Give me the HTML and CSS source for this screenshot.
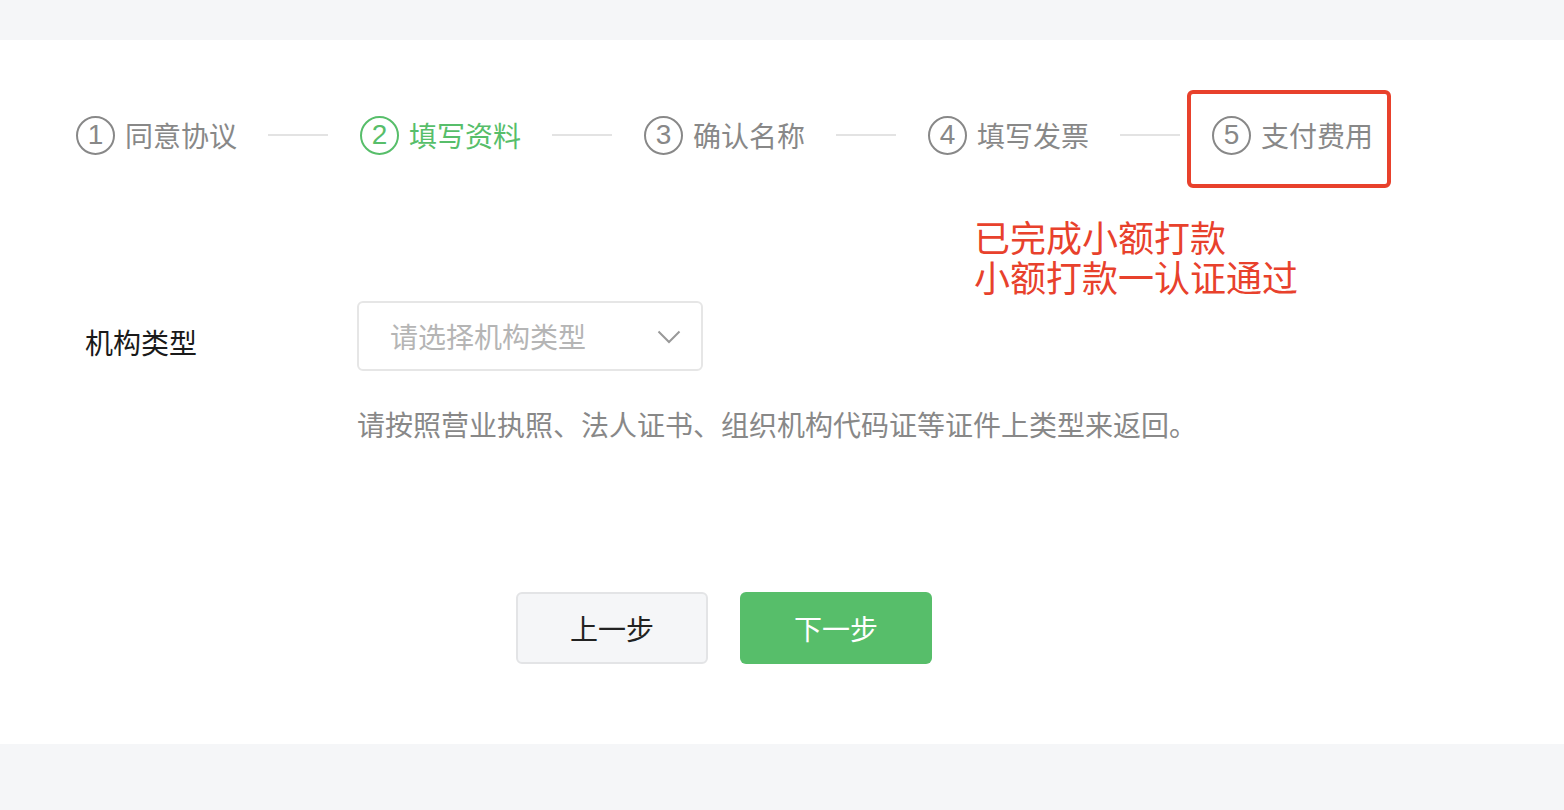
FILE: index.html
```html
<!DOCTYPE html>
<html lang="zh-CN">
  <head>
    <meta charset="UTF-8" />
    <meta name="viewport" content="width=device-width, initial-scale=1.0" />
    <title>机构认证</title>
    <link rel="stylesheet" href="styles.css">
  </head>
  <body>
    <div class="top-band"></div>

    <div class="card">
      <div class="steps">
        <div class="step">
          <span class="step-num">1</span>
          <span class="step-name">同意协议</span>
        </div>
        <div class="step-line"></div>
        <div class="step active">
          <span class="step-num">2</span>
          <span class="step-name">填写资料</span>
        </div>
        <div class="step-line"></div>
        <div class="step">
          <span class="step-num">3</span>
          <span class="step-name">确认名称</span>
        </div>
        <div class="step-line"></div>
        <div class="step">
          <span class="step-num">4</span>
          <span class="step-name">填写发票</span>
        </div>
        <div class="step-line"></div>
        <div class="step marked">
          <span class="step-num">5</span>
          <span class="step-name">支付费用</span>
        </div>
      </div>

      <div class="note">
        <p>已完成小额打款</p>
        <p>小额打款一认证通过</p>
      </div>

      <div class="form-row">
        <label class="form-label">机构类型</label>
        <div class="select">
          <span class="select-placeholder">请选择机构类型</span>
          <svg class="select-arrow" width="24" height="14" viewBox="0 0 24 14">
            <polyline points="1.5,1.5 12,12 22.5,1.5" fill="none" stroke="#999" stroke-width="2" />
          </svg>
        </div>
      </div>

      <p class="form-hint">请按照营业执照、法人证书、组织机构代码证等证件上类型来返回。</p>

      <div class="actions">
        <button class="btn btn-prev">上一步</button>
        <button class="btn btn-next">下一步</button>
      </div>
    </div>
  </body>
</html>
```

FILE: styles.css
```css
body {
  margin: 0;
  font-family: "Noto Sans CJK SC", "Noto Sans", sans-serif;
  background: #f5f6f8;
  color: #222;
}

.top-band {
  height: 40px;
}

.card {
  background: white;
  height: 704px;
  box-sizing: border-box;
  padding-top: 75px;
}

.steps {
  display: flex;
  align-items: center;
  height: 40px;
  padding-left: 76px;
}

.step {
  position: relative;
  display: flex;
  align-items: center;
  gap: 10px;
  color: #888;
}

.step-num {
  width: 35px;
  height: 35px;
  border: 2px solid #888;
  border-radius: 50%;
  display: flex;
  align-items: center;
  justify-content: center;
  font-size: 28px;
  font-family: "Liberation Sans", sans-serif;
  line-height: 1;
}

.step-name {
  font-size: 28px;
  line-height: 40px;
  width: 111px;
  white-space: nowrap;
}

.step.active {
  color: #57be6a;
}

.step.active .step-num {
  border-color: #57be6a;
}

/* red annotation box drawn over step 5 */
.step.marked::after {
  content: "";
  position: absolute;
  left: -25px;
  top: -25px;
  width: 196px;
  height: 90px;
  border: 4px solid #e8412c;
  border-radius: 6px;
}

.step-line {
  width: 60px;
  height: 2px;
  background: #e3e3e3;
  margin: 0 32px;
}

.note {
  margin-top: 61px;
  margin-left: 974px;
  color: #e8412c;
  font-size: 36px;
  line-height: 40px;
}

.note p {
  margin: 0;
}

.form-row {
  display: flex;
  align-items: flex-start;
  margin-top: 5px;
  padding-left: 85px;
}

.form-label {
  width: 272px;
  font-size: 28px;
  line-height: 40px;
  padding-top: 21px;
  color: #1a1a1a;
}

.select {
  width: 346px;
  height: 70px;
  box-sizing: border-box;
  border: 2px solid #e6e6e6;
  border-radius: 6px;
  display: flex;
  align-items: center;
  justify-content: space-between;
  padding: 0 20px 0 31px;
}

.select-placeholder {
  font-size: 28px;
  color: #b5b5b5;
}

.select-arrow {
  margin-top: 2px;
}

.form-hint {
  margin: 33px 0 0 357px;
  font-size: 28px;
  line-height: 40px;
  color: #888;
}

.actions {
  display: flex;
  gap: 32px;
  margin-top: 148px;
  padding-left: 516px;
}

.btn {
  width: 192px;
  height: 72px;
  border-radius: 6px;
  font-family: "Noto Sans CJK SC", sans-serif;
  font-size: 28px;
  cursor: pointer;
}

.btn-prev {
  background: #f5f6f8;
  border: 2px solid #e3e4e6;
  color: #222;
}

.btn-next {
  background: #57be6a;
  border: none;
  color: white;
}
```
